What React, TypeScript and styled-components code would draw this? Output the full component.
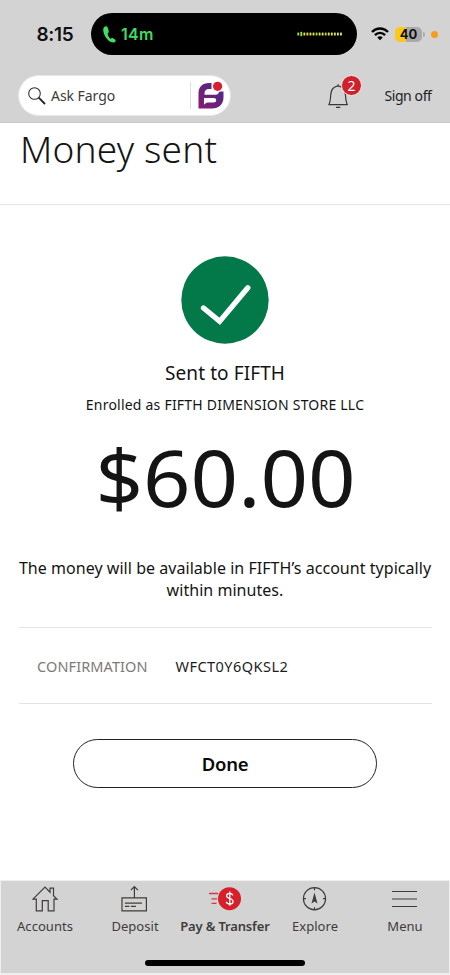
import React from "react";
import styled, { createGlobalStyle } from "styled-components";

const Global = createGlobalStyle`
  * { box-sizing: border-box; }
  html, body { margin: 0; padding: 0; background: #fff; }
  body { font-family: "Noto Sans", "Open Sans", sans-serif; color: #141414; }
  button { font: inherit; color: inherit; background: none; border: 0; padding: 0; }
  svg { display: block; flex: none; overflow: visible; }
`;

const Screen = styled.div`
  width: 450px;
  height: 975px;
  display: flex;
  flex-direction: column;
  overflow: hidden;
  background: #fff;
`;

const Top = styled.header`
  height: 123px;
  flex: none;
  background: #d3d3d3;
  border-bottom: 1px solid #c9c9cb;
`;

const StatusBar = styled.div`
  height: 68px;
  display: flex;
  align-items: center;
  padding-left: 36.5px;
`;

const Clock = styled.span`
  width: 54.5px;
  margin-top: 1px;
  font: 600 19px/24px Inter, sans-serif;
  letter-spacing: -0.3px;
  color: #111;
`;

const Island = styled.div`
  width: 266px;
  height: 42px;
  margin-right: 14px;
  border-radius: 21px;
  background: #000;
  display: flex;
  align-items: center;
  padding: 0 14px 0 12px;
`;

const CallTime = styled.span`
  margin-left: 5px;
  font: 600 16px/20px Inter, sans-serif;
  letter-spacing: 0.3px;
  color: #3ddc62;
  flex: 1;
`;

const Battery = styled.span`
  margin-left: 6px;
  width: 27px;
  height: 15px;
  border-radius: 5px;
  background: linear-gradient(90deg, #fcc81a 0 11px, #a9a9a9 11px);
  font: 700 13px/15px Inter, sans-serif;
  text-align: center;
  color: #111;
`;

const BatteryTip = styled.span`
  width: 1.5px;
  height: 5px;
  margin-left: 1px;
  border-radius: 0 2px 2px 0;
  background: #aaa;
`;

const MicDot = styled.span`
  width: 7px;
  height: 7px;
  margin-left: 6px;
  border-radius: 50%;
  background: #f59e1c;
`;

const Toolbar = styled.div`
  height: 54px;
  display: flex;
  align-items: center;
  padding: 1px 18.5px 0 18px;
`;

const Search = styled.div`
  width: 213px;
  height: 41px;
  border: 1px solid #e9e5e2;
  border-radius: 21px;
  background: #fff;
  display: flex;
  align-items: center;
  padding-left: 9px;
`;

const SearchLabel = styled.span`
  width: 139px;
  margin-left: 5px;
  font-size: 14px;
  line-height: 20px;
  letter-spacing: -0.05px;
  color: #3b3b3b;
`;

const Divider = styled.span`
  width: 1px;
  height: 27px;
  margin-right: 7px;
  background: #dedede;
`;

const Bell = styled.div`
  position: relative;
  margin-left: 97px;
  margin-top: 1px;
`;

const Badge = styled.span`
  position: absolute;
  left: 13px;
  top: -9px;
  width: 21px;
  height: 21px;
  border: 1px solid #f4e8e8;
  border-radius: 50%;
  background: #cf202b;
  color: #fff;
  font-size: 14px;
  line-height: 19px;
  text-align: center;
`;

const SignOff = styled.button`
  margin-left: auto;
  font-size: 14px;
  line-height: 20px;
  letter-spacing: -0.4px;
  color: #222;
`;

const TitleRow = styled.div`
  height: 82px;
  flex: none;
  padding: 6px 20px 0;
  border-bottom: 1px solid #e6e6e6;
`;

const Title = styled.h1`
  margin: 0;
  font-weight: 300;
  font-size: 37px;
  line-height: 40px;
  letter-spacing: 0.2px;
`;

const Content = styled.main`
  flex: 1;
  display: flex;
  flex-direction: column;
  align-items: center;
  padding: 51px 18px 0;
`;

const Recipient = styled.div`
  margin-top: 17px;
  font-size: 19px;
  line-height: 24px;
  letter-spacing: 0.1px;
`;

const Enrolled = styled.div`
  margin-top: 10px;
  font-size: 14px;
  line-height: 20px;
  letter-spacing: 0.22px;
`;

const Amount = styled.div`
  margin: 17px 0 0 2px;
  font-size: 79px;
  line-height: 90px;
  transform: scaleX(1.053);
`;

const Note = styled.p`
  margin: 35px 0 0;
  font-size: 16px;
  line-height: 22px;
  letter-spacing: 0.04px;
  text-align: center;
  white-space: nowrap;
`;

const Confirmation = styled.div`
  width: 413px;
  height: 77px;
  margin: 26px 0 0 1px;
  border: solid #e4e4e4;
  border-width: 1px 0;
  display: flex;
  align-items: center;
  padding: 0 0 0 18px;
  font-size: 14.5px;
`;

const Term = styled.span`
  width: 138.5px;
  letter-spacing: 0.1px;
  color: #7d7a78;
`;

const Code = styled.span`
  letter-spacing: 0.46px;
  color: #1d1d1d;
`;

const Done = styled.button`
  width: 304px;
  height: 49px;
  margin-top: 35px;
  border: 1.3px solid #222;
  border-radius: 25px;
  font-size: 18.5px;
  font-weight: 600;
  letter-spacing: -0.3px;
  color: #0a0a0a;
`;

const Nav = styled.nav`
  height: 95px;
  flex: none;
  border: solid #efefef;
  border-width: 1px 1px 2px;
  background: #d3d3d3;
  display: flex;
  flex-direction: column;
  align-items: center;
`;

const Tabs = styled.div`
  width: 450px;
  display: grid;
  grid-template-columns: repeat(5, 90px);
  height: 79px;
`;

const Tab = styled.button<{ $active?: boolean }>`
  display: flex;
  flex-direction: column;
  align-items: center;
  padding-top: 5px;
  font-size: 13px;
  line-height: 18px;
  white-space: nowrap;
  font-weight: ${(p) => (p.$active ? 600 : 400)};
  letter-spacing: ${(p) => (p.$active ? -0.16 : 0.04)}px;
  color: #403c3a;
`;

const TabLabel = styled.span`
  margin-top: 5px;
`;

const HomeIndicator = styled.span`
  width: 160px;
  height: 6px;
  border-radius: 3px;
  background: #000;
`;

const line = { fill: "none", stroke: "#403c3a", strokeWidth: 1.2 } as const;

const Phone = () => (
  <svg width="13" height="17" viewBox="0 0 13 17">
    <path d="M2 .6C.6 1.200 0 2.800.3 5c.6 4.600 4.200 10 8.700 11.300 1.800.5 3.600-.2 3.700-1.600.1-1-3-3.200-4-2.700l-1.200.8C5.900 11.500 4.900 9.600 4.600 7.500l1-.9C6.200 5.900 5 .8 3.700.4 3.100.2 2.500.4 2 .6Z" fill="#3fdf65" />
  </svg>
);

const Wave = () => (
  <svg width="46" height="6" viewBox="0 0 46 6">
    {Array.from({ length: 15 }, (_, i) => (
      <rect key={i} x={0.3 + i * 3.05} y={i === 1 ? 0.8 : 1.5} width="1.9" height={i === 1 ? 4.4 : 3} rx=".6" fill={i < 2 || i === 6 || i === 9 ? "#9be03a" : "#e2e04c"} />
    ))}
  </svg>
);

const Wifi = () => (
  <svg width="18" height="14" viewBox="0 0 18 14">
    <g fill="none" stroke="#050505" strokeWidth="2.3">
      <path d="M1 5C5.500.300 12.500.300 17 5" />
      <path d="M3.900 8.100C6.800 5.100 11.200 5.100 14.100 8.100" />
    </g>
    <path d="M6.300 10.400C7.800 9 10.200 9 11.700 10.400L9 13.200Z" fill="#050505" />
  </svg>
);

const Magnifier = () => (
  <svg width="18" height="18" viewBox="0 0 18 18">
    <circle cx="6.500" cy="6.500" r="5.800" fill="none" stroke="#333" strokeWidth="1.100" />
    <path d="M10.700 10.700 17 17" stroke="#222" strokeWidth="1.800" />
  </svg>
);

const Fargo = () => (
  <svg width="26" height="27" viewBox="0 0 26 27">
    <defs>
      <linearGradient id="fargo" x1="0" y1="1" x2="1" y2="0">
        <stop offset="0" stopColor="#8a1b74" />
        <stop offset=".55" stopColor="#63247d" />
        <stop offset="1" stopColor="#4b2a98" />
      </linearGradient>
    </defs>
    <path
      d="M13.500 1H11C4.500 1 .5 5 .5 11.500V26.500H14C21 26.500 25.500 22 25.500 15.500V9.500H21C20.800 11.800 19.600 12.800 17.500 12.800H6.500V11.500C6.500 8.500 8 7 11 7H13.500ZM6 16H15.500C17.200 16 18.200 16.700 18.200 18.200S17.200 20.400 15.500 20.400H9.800C7.800 20.400 7.600 22 6 22.500Z"
      fill="url(#fargo)"
      fillRule="evenodd"
    />
    <circle cx="19.600" cy="4.300" r="5.500" fill="#fff" />
    <circle cx="19.600" cy="4.300" r="4.600" fill="#d91f2b" />
  </svg>
);

const BellIcon = () => (
  <svg width="22" height="24" viewBox="0 0 22 24">
    <path
      d="M.8 20.700C2.200 18.500 2.400 16 2.700 11.500C3 6 5.400 3 9 2.200H11C14.800 3 17.200 6 17.500 11.500C17.800 16 18 18.500 19.400 20.700ZM10.100 2.200V.3M8 23.400H12.300"
      fill="none"
      stroke="#3c3836"
      strokeWidth="1.200"
      strokeLinejoin="round"
    />
  </svg>
);

const Success = () => (
  <svg width="88" height="88" viewBox="0 0 88 88">
    <circle cx="44" cy="44" r="43.700" fill="#03794a" />
    <path d="M22.500 52 38.700 65.400 66.800 31.700" fill="none" stroke="#fff" strokeWidth="5.300" strokeLinecap="round" strokeLinejoin="miter" />
  </svg>
);

const House = () => (
  <svg width="26" height="26" viewBox="0 0 26 26">
    <path d="M1 13.200 13 1.200 18 6.200V2.200H21.500V9.700L25 13.200H22V24.800H16.200V14.700H10.300V24.800H4.300V13.200Z" {...line} />
  </svg>
);

const Deposit = () => (
  <svg width="26" height="26" viewBox="0 0 26 26">
    <path d="M0 11.800H24.400V24.900H0ZM12.400 11.500V.5M8.900 4.100 12.400.5 15.900 4.100M2.900 17.100H19.900M2.900 20.300H7.400M8.900 20.300H13.900" {...line} />
  </svg>
);

const Pay = () => (
  <svg width="34" height="26" viewBox="0 0 34 26">
    <path d="M1 7.500H10M3.500 12.800H9M3.500 17.300H8.500" stroke="#cf3c42" strokeWidth="1.300" />
    <circle cx="21.500" cy="12.700" r="11.500" fill="#d71f2a" />
    <path d="M24.900 9.400C24.400 8 23.300 7.400 21.700 7.400C19.800 7.400 18.600 8.400 18.600 9.900C18.600 11.600 20.100 12 21.800 12.500C23.600 13 25 13.600 25 15.400C25 17 23.700 18 21.800 18C20 18 18.700 17.300 18.200 15.700M21.800 5.600V19.700" fill="none" stroke="#fff" strokeWidth="1.300" />
  </svg>
);

const Compass = () => (
  <svg width="26" height="26" viewBox="0 0 26 26">
    <circle cx="12.500" cy="12.700" r="11.100" {...line} />
    <path d="M12.500 1.700V4.200M12.500 21.200V23.700M1.500 12.700H4M21 12.700H23.500" {...line} />
    <path d="M12.500 6.500 15.500 17.400 12.500 15.400 9.500 17.400Z" fill="#403c3a" />
  </svg>
);

const MenuIcon = () => (
  <svg width="26" height="26" viewBox="0 0 26 26">
    <path d="M0 5.500H25M0 13H25M0 20.500H25" {...line} />
  </svg>
);

const tabs = [
  { label: "Accounts", Icon: House },
  { label: "Deposit", Icon: Deposit },
  { label: "Pay & Transfer", Icon: Pay, active: true },
  { label: "Explore", Icon: Compass },
  { label: "Menu", Icon: MenuIcon },
];

export default function App() {
  return (
    <Screen>
      <Global />
      <Top>
        <StatusBar>
          <Clock>8:15</Clock>
          <Island>
            <Phone />
            <CallTime>14m</CallTime>
            <Wave />
          </Island>
          <Wifi />
          <Battery>40</Battery>
          <BatteryTip />
          <MicDot />
        </StatusBar>
        <Toolbar>
          <Search>
            <Magnifier />
            <SearchLabel>Ask Fargo</SearchLabel>
            <Divider />
            <Fargo />
          </Search>
          <Bell>
            <BellIcon />
            <Badge>2</Badge>
          </Bell>
          <SignOff>Sign off</SignOff>
        </Toolbar>
      </Top>
      <TitleRow>
        <Title>Money sent</Title>
      </TitleRow>
      <Content>
        <Success />
        <Recipient>Sent to FIFTH</Recipient>
        <Enrolled>Enrolled as FIFTH DIMENSION STORE LLC</Enrolled>
        <Amount>$60.00</Amount>
        <Note>
          The money will be available in FIFTH’s account typically
          <br />
          within minutes.
        </Note>
        <Confirmation>
          <Term>CONFIRMATION</Term>
          <Code>WFCT0Y6QKSL2</Code>
        </Confirmation>
        <Done>Done</Done>
      </Content>
      <Nav>
        <Tabs>
          {tabs.map(({ label, Icon, active }) => (
            <Tab key={label} $active={active}>
              <Icon />
              <TabLabel>{label}</TabLabel>
            </Tab>
          ))}
        </Tabs>
        <HomeIndicator />
      </Nav>
    </Screen>
  );
}
